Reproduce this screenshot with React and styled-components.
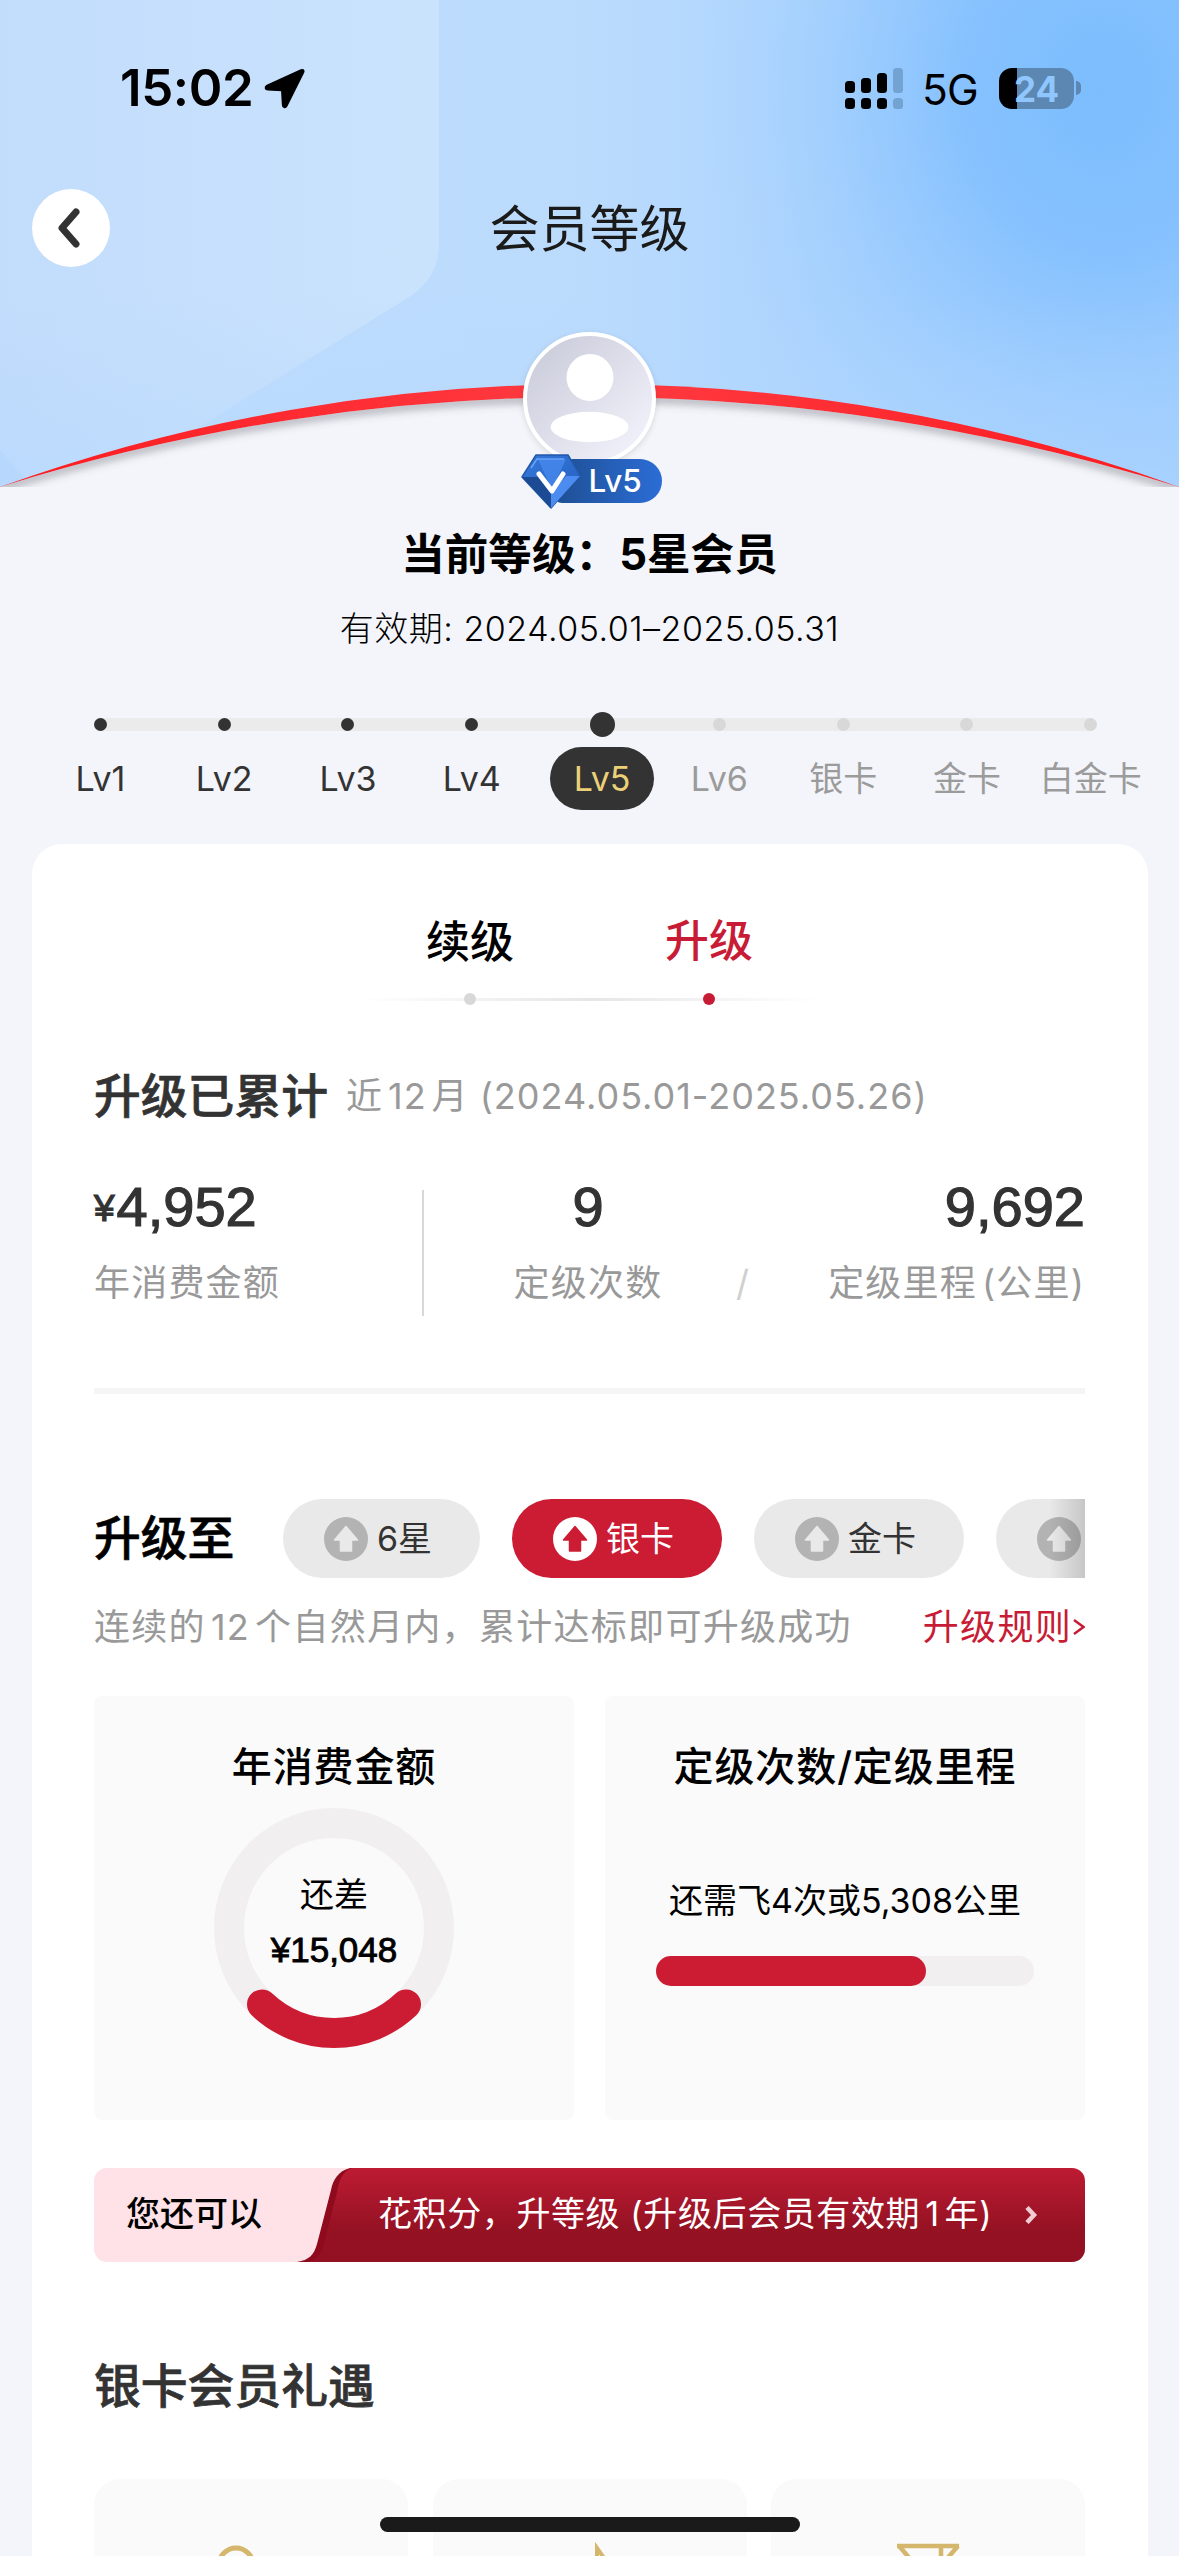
import * as React from "react"
import styled, { createGlobalStyle } from "styled-components"

const GlobalStyle = createGlobalStyle`
  * {
    box-sizing: border-box;
  }

  body {
    margin: 0;
    background-color: #f4f5fa;
    font-family: "Inter", "Noto Sans CJK SC", sans-serif;
    color: #333333;
  }

  h1, h2, h3, p {
    margin: 0;
    font-weight: 400;
  }

  button {
    border: 0;
    padding: 0;
    background: none;
    color: inherit;
    font-family: inherit;
  }
`

const Page = styled.main`
  position: relative;
  width: 1179px;
  height: 2556px;
  overflow: hidden;
  white-space: nowrap;
`

/* Digits and brackets that sit between Chinese characters */
const Inset = styled.span`
  margin: 0 ${(props) => props.$right ?? 5}px 0 5px;
`

/* Header */
const Backdrop = styled.svg`
  position: absolute;
  top: 0;
  left: 0;
  z-index: -1;
`
const StatusBar = styled.div`
  display: flex;
  justify-content: space-between;
  align-items: center;
  height: 176px;
  padding: 0 98px 0 120px;
  color: #000000;
`
const StatusGroup = styled.div`
  display: flex;
  align-items: center;
`
const Clock = styled.span`
  width: 144px;
  font-size: 51px;
  font-weight: 600;
  line-height: 60px;
  letter-spacing: -0.4px;
`
const Network = styled.span`
  margin: 3px 21px 0 19px;
  font-size: 42.5px;
  line-height: 50px;
  letter-spacing: -0.8px;
`
const Battery = styled.div`
  width: 75px;
  height: 41px;
  border-radius: 13px;
  background: linear-gradient(90deg, #000000 18px, #5b87b2 18px);
  color: #8fc6fd;
  font-size: 35px;
  font-weight: 700;
  line-height: 42px;
  text-align: center;
`
const BatteryTip = styled.div`
  width: 5px;
  height: 14px;
  margin-left: 2px;
  border-radius: 0 5px 5px 0;
  background-color: #5b87b2;
`
const NavBar = styled.header`
  display: grid;
  grid-template-columns: 1fr auto 1fr;
  align-items: center;
  height: 103px;
  padding: 0 32px;
`
const BackButton = styled.button`
  display: flex;
  align-items: center;
  justify-content: center;
  width: 78px;
  height: 78px;
  padding-right: 4px;
  border-radius: 50%;
  background-color: #ffffff;
`
const NavTitle = styled.h1`
  padding-top: 2px;
  color: #1a1a1a;
  font-size: 50px;
  line-height: 60px;
`

/* Current level */
const Profile = styled.section`
  display: flex;
  flex-direction: column;
  align-items: center;
  padding-top: 53px;
`
const Avatar = styled.div`
  width: 133px;
  height: 133px;
  border: 4px solid #ffffff;
  border-radius: 50%;
  background: linear-gradient(135deg, #cccddb 10%, #eeeff8 85%);
  box-shadow: 0 2px 6px rgba(0, 0, 0, 0.12);
`
const LevelBadge = styled.div`
  position: relative;
  display: flex;
  align-items: center;
  width: 108px;
  height: 44px;
  margin: -6px 0 0 36px;
  padding-left: 35px;
  border-radius: 8px 22px 22px 8px;
  background: linear-gradient(90deg, #1f4f93, #2b6dd6);
  color: #ffffff;
  font-size: 31.5px;
  font-weight: 500;
  line-height: 46px;
`
const BadgeGem = styled.svg`
  position: absolute;
  left: -36px;
  top: -9px;
`
const LevelTitle = styled.h2`
  margin-top: 22px;
  color: #000000;
  font-size: 43.6px;
  font-weight: 700;
  line-height: 60px;
`
const Validity = styled.p`
  margin-top: 19px;
  color: #000000;
  font-size: 34px;
  font-weight: 300;
  line-height: 50px;
  letter-spacing: 0.5px;
`

/* Level steps */
const Steps = styled.ol`
  display: grid;
  grid-template-columns: repeat(9, 123.8px);
  height: 98px;
  margin: 58px 0 0 38.5px;
  padding: 0;
  list-style: none;
  background: linear-gradient(#ebebec, #ebebec) 62px 6px / 991px 13px no-repeat;
`
const Step = styled.li`
  display: flex;
  flex-direction: column;
  align-items: center;
  padding-left: ${(props) => (props.$current ? "13px" : "0")};
`
const StepDot = styled.span`
  width: ${(props) => (props.$current ? "25px" : "13px")};
  height: ${(props) => (props.$current ? "25px" : "13px")};
  margin: ${(props) => (props.$current ? "0 0 10px" : "6px 0 16px")};
  border-radius: 50%;
  background-color: ${(props) => (props.$locked ? "#d8d8d8" : "#333333")};
`
const StepLabel = styled.span`
  padding: ${(props) => (props.$current ? "0 24px" : "0")};
  border-radius: 32px;
  background-color: ${(props) => (props.$current ? "#333333" : "transparent")};
  color: ${(props) => (props.$current ? "#ecd078" : props.$locked ? "#9b9b9b" : "#333333")};
  font-size: 34px;
  line-height: 63px;
`

/* White card */
const Card = styled.section`
  width: 1116px;
  height: 1740px;
  margin: 34px 0 0 32px;
  padding: 0 63px 0 62px;
  border-radius: 30px;
  background-color: #ffffff;
`
const Tabs = styled.div`
  display: flex;
  justify-content: center;
  gap: 151px;
  height: 162px;
  padding-top: 67px;
  background: linear-gradient(90deg, transparent, #e6e6e6, transparent) center 154px / 460px 3px no-repeat;
`
const Tab = styled.button`
  display: flex;
  flex-direction: column;
  align-items: center;
  color: ${(props) => (props.$active ? "#c81c36" : "#000000")};
  font-size: 44px;
  font-weight: 500;
  line-height: ${(props) => (props.$active ? "60px" : "63px")};

  &::after {
    content: "";
    width: 12px;
    height: 12px;
    margin-top: ${(props) => (props.$active ? "22px" : "19px")};
    border-radius: 50%;
    background-color: ${(props) => (props.$active ? "#c81c36" : "#d8d8d8")};
  }
`
const Heading = styled.h2`
  color: ${(props) => props.$color || "#333333"};
  font-size: 46.8px;
  font-weight: 500;
  line-height: 60px;
  -webkit-text-stroke: 0.7px ${(props) => props.$color || "#333333"};
`
const HeadingRow = styled.div`
  display: flex;
  align-items: center;
  height: 60px;
  margin-top: 60px;
`
const HeadingNote = styled.span`
  margin-left: 18px;
  padding-bottom: 1px;
  color: #999999;
  font-size: 36px;
  line-height: 50px;
  letter-spacing: 1px;
`
const Stats = styled.div`
  display: grid;
  grid-template-columns: 328px 2px 328px 1fr;
  margin-top: 64px;
`
const Stat = styled.div`
  text-align: ${(props) => props.$align || "left"};
`
const StatValue = styled.p`
  height: 64px;
  margin-top: -15px;
  font-family: "Liberation Sans", sans-serif;
  font-size: 56px;
  line-height: 64px;
  -webkit-text-stroke: 1.2px #333333;

  small {
    margin-right: 2px;
    font-size: 37px;
    line-height: 1;
    vertical-align: 5px;
  }
`
const StatLabel = styled.p`
  margin-top: 19px;
  color: #999999;
  font-size: 36px;
  line-height: 50px;
  letter-spacing: 1.2px;
`
const StatDivider = styled.div`
  height: 126px;
  background-color: #d8d8d8;
`
const Slash = styled.span`
  float: left;
  margin-left: -16px;
  color: #d0d0d0;
`
const Rule = styled.hr`
  height: 6px;
  margin: 72px 0 0;
  border: 0;
  background-color: #f5f5f5;
`

/* Upgrade targets */
const TargetRow = styled.div`
  display: flex;
  align-items: center;
  height: 79px;
  margin-top: 105px;

  ${Heading} {
    padding-bottom: 2px;
  }
`
const TargetList = styled.div`
  position: relative;
  display: flex;
  gap: 32px;
  width: 802px;
  margin-left: auto;
  overflow: hidden;

  &::after {
    content: "";
    position: absolute;
    right: 0;
    width: 36px;
    height: 79px;
    background: linear-gradient(90deg, transparent, rgba(0, 0, 0, 0.15));
  }
`
const Target = styled.button`
  display: flex;
  flex: none;
  align-items: center;
  gap: 9px;
  width: ${(props) => props.$width || "210px"};
  height: 79px;
  padding-left: 41px;
  border-radius: 40px;
  background-color: ${(props) => (props.$active ? "#cb1c34" : "#e9e9e9")};
  color: ${(props) => (props.$active ? "#ffffff" : "#333333")};
  font-size: 34px;
  line-height: 77px;
`
const RuleRow = styled.div`
  display: flex;
  justify-content: space-between;
  margin-top: 24px;
  color: #999999;
  font-size: 36px;
  line-height: 50px;
  letter-spacing: 1.3px;
`
const RuleLink = styled.a`
  display: flex;
  align-items: center;
  gap: 1px;
  color: #c81c36;
`
const Panels = styled.div`
  display: grid;
  grid-template-columns: 1fr 1fr;
  gap: 31px;
  margin-top: 44px;
`
const Panel = styled.div`
  display: flex;
  flex-direction: column;
  align-items: center;
  height: 424px;
  padding-top: 46px;
  border-radius: 8px;
  background-color: #fafafa;
  color: #000000;
`
const PanelTitle = styled.h3`
  font-size: 40px;
  font-weight: 500;
  line-height: 50px;
  letter-spacing: 0.9px;
`
const Donut = styled.div`
  display: grid;
  place-items: center;
  margin-top: 16px;

  > * {
    grid-area: 1 / 1;
  }
`
const DonutText = styled.div`
  text-align: center;
  font-size: 34px;
  line-height: 50px;
  margin-top: -12px;
`
const DonutAmount = styled.p`
  margin-top: 5px;
  font-family: "Liberation Sans", sans-serif;
  font-size: 35px;
  -webkit-text-stroke: 0.9px #000000;
`
const MileageText = styled.p`
  margin-top: 84px;
  font-size: 34px;
  line-height: 50px;
`
const Progress = styled.div`
  width: 378px;
  height: 30px;
  margin-top: 30px;
  border-radius: 15px;
  background-color: #f1eff0;
`
const ProgressFill = styled.div`
  height: 100%;
  border-radius: 15px;
  background-color: #cb1c34;
`

/* Points banner */
const Banner = styled.div`
  position: relative;
  z-index: 0;
  display: flex;
  align-items: center;
  height: 94px;
  margin-top: 48px;
  padding: 0 46px 0 32px;
  border-radius: 13px;
  overflow: hidden;
  color: #ffffff;
  font-size: 34px;
  line-height: 50px;
`
const BannerShape = styled.svg`
  position: absolute;
  top: 0;
  left: 0;
  z-index: -1;
`
const BannerLead = styled.strong`
  width: 252px;
  padding-bottom: 2px;
  color: #000000;
  font-weight: 500;
`
const BannerText = styled.span`
  flex: 1;
  padding-bottom: 2px;
  letter-spacing: 0.6px;
`

/* Benefits */
const BenefitsTitle = styled(Heading)`
  margin-top: 94px;
`
const Benefits = styled.div`
  display: grid;
  grid-template-columns: repeat(3, 314px);
  justify-content: space-between;
  margin-top: 63px;
`
const Benefit = styled.div`
  display: flex;
  justify-content: center;
  height: 300px;
  padding-top: 60px;
  border-radius: 26px;
  background-color: #fafafa;
`
const HomeIndicator = styled.div`
  position: absolute;
  left: 380px;
  bottom: 24px;
  width: 420px;
  height: 15px;
  border-radius: 8px;
  background-color: #1a1a1a;
`

const steps = ["Lv1", "Lv2", "Lv3", "Lv4", "Lv5", "Lv6", "银卡", "金卡", "白金卡"]
const currentStep = 4

const HeaderBackdrop = () => (
  <Backdrop width="1179" height="500" viewBox="0 0 1179 500">
    <defs>
      <linearGradient id="sky" x1="0" x2="1" y1="0" y2="0">
        <stop offset="0" stopColor="#bfdcfd" />
        <stop offset="0.5" stopColor="#bbdbfd" />
        <stop offset="0.75" stopColor="#a8d2fe" />
        <stop offset="1" stopColor="#9dccfe" />
      </linearGradient>
      <radialGradient id="glow" gradientUnits="userSpaceOnUse" cx="0" cy="0" r="1" gradientTransform="translate(1100 90) scale(400 460)">
        <stop offset="0" stopColor="#7cbdfe" />
        <stop offset="0.35" stopColor="#7fbefe" stopOpacity="0.8" />
        <stop offset="0.7" stopColor="#8ec5fe" stopOpacity="0.3" />
        <stop offset="1" stopColor="#9dccfe" stopOpacity="0" />
      </radialGradient>
      <linearGradient id="pane" x1="0" x2="1" y1="0" y2="0">
        <stop offset="0" stopColor="#c2dcfc" />
        <stop offset="1" stopColor="#cae3fd" />
      </linearGradient>
      <linearGradient id="fade" x1="0" x2="0" y1="0" y2="1">
        <stop offset="0.6" stopColor="#b4d8fe" stopOpacity="0" />
        <stop offset="1" stopColor="#b4d8fe" stopOpacity="0.45" />
      </linearGradient>
      <linearGradient id="ribbon" x1="0" x2="1" y1="0" y2="0">
        <stop offset="0" stopColor="#fb1c20" />
        <stop offset="0.5" stopColor="#ff3b42" />
        <stop offset="1" stopColor="#fb1c20" />
      </linearGradient>
      <filter id="soft" x="-5%" y="-20%" width="110%" height="150%">
        <feGaussianBlur stdDeviation="4" />
      </filter>
      <clipPath id="ground">
        <path d="M0 487A1976 1976 0 0 1 1179 487V487H0Z" />
      </clipPath>
    </defs>
    <rect width="1179" height="487" fill="url(#sky)" />
    <rect width="1179" height="487" fill="url(#glow)" />
    <path d="M0 0H439V246Q438 280 406 299L196 429L0 487Z" fill="url(#pane)" />
    <path d="M0 450L32 487H0Z" fill="#b9d8fb" />
    <rect width="1179" height="487" fill="url(#fade)" />
    <path d="M0 487A1738 1738 0 0 1 1179 487Z" fill="url(#ribbon)" />
    <path d="M0 487A1976 1976 0 0 1 1179 487V500H0Z" fill="#f4f5fa" />
    <g clipPath="url(#ground)">
      <path d="M0 488A1976 1976 0 0 1 1179 488" fill="none" stroke="#5a5a66" strokeOpacity="0.5" strokeWidth="7" filter="url(#soft)" />
    </g>
  </Backdrop>
)

const Signal = () => (
  <svg width="58" height="41" viewBox="0 0 58 41">
    <rect x="0" y="13" width="10" height="12" rx="3.5" />
    <rect x="16" y="10" width="10" height="15" rx="3.5" />
    <rect x="32" y="5" width="10" height="20" rx="3.5" />
    <rect x="48" y="0" width="10" height="25" rx="3.5" fill="#73a3d2" />
    <rect x="0" y="30" width="10" height="11" rx="3.5" />
    <rect x="16" y="30" width="10" height="11" rx="3.5" />
    <rect x="32" y="30" width="10" height="11" rx="3.5" />
    <rect x="48" y="30" width="10" height="11" rx="3.5" fill="#73a3d2" />
  </svg>
)

const UpArrow = ({ active }) => (
  <svg width="44" height="44" viewBox="0 0 44 44">
    <circle cx="22" cy="22" r="22" fill={active ? "#ffffff" : "#b3b3b3"} />
    <path
      d="M22 9.5L33.5 23H27.5V34H16.5V23H10.5Z"
      fill={active ? "#cb1c34" : "#e9e9e9"}
      stroke={active ? "#cb1c34" : "#e9e9e9"}
      strokeWidth="1.5"
      strokeLinejoin="round"
    />
  </svg>
)

const Gem = () => (
  <BadgeGem width="68" height="62" viewBox="0 0 68 62">
    <defs>
      <linearGradient id="gem" x1="0" x2="1" y1="0" y2="1">
        <stop offset="0" stopColor="#3577dc" />
        <stop offset="1" stopColor="#2360bd" />
      </linearGradient>
    </defs>
    <path d="M18 5H50L62 25L33 58L4 27Z" fill="url(#gem)" stroke="#2159ab" strokeWidth="1.5" strokeLinejoin="round" />
    <path d="M4 27H20L33 44V58Z" fill="#1c4b93" />
    <path d="M62 26H48L33 44V58Z" fill="#4c8cf0" />
    <path d="M20 9H48L34 40Z" fill="#4a8bf1" opacity="0.7" />
    <path d="M13 18L19 9H46" fill="none" stroke="#6aa3f7" strokeWidth="1.5" />
    <path d="M21 24L34 41L45 24" fill="none" stroke="#ffffff" strokeWidth="5" strokeLinecap="round" strokeLinejoin="round" />
  </BadgeGem>
)

const App = () => {
  return (
    <Page>
      <GlobalStyle />
      <HeaderBackdrop />
      <StatusBar>
        <StatusGroup>
          <Clock>15:02</Clock>
          <svg width="42" height="41" viewBox="0 0 42 41" stroke="#000000" strokeWidth="1.5" strokeLinejoin="round">
            <path d="M37 2L3 17.500C0.500 18.700 1 21.800 3.800 21.800L17.800 22.500L18.600 37C18.700 39.800 21.600 40.300 22.800 38L39.500 4.500C40.500 2.300 39.200 1 37 2Z" />
          </svg>
        </StatusGroup>
        <StatusGroup>
          <Signal />
          <Network>5G</Network>
          <Battery>24</Battery>
          <BatteryTip />
        </StatusGroup>
      </StatusBar>
      <NavBar>
        <BackButton aria-label="返回">
          <svg width="24" height="40" viewBox="0 0 24 40" fill="none" stroke="#333333" strokeWidth="7" strokeLinecap="round" strokeLinejoin="round">
            <path d="M19 4L5 20L19 36" />
          </svg>
        </BackButton>
        <NavTitle>会员等级</NavTitle>
      </NavBar>

      <Profile>
        <Avatar>
          <svg width="125" height="125" viewBox="0 0 125 125" fill="#ffffff">
            <circle cx="63" cy="41.500" r="23.500" />
            <ellipse cx="62.500" cy="91" rx="39" ry="15.200" />
          </svg>
        </Avatar>
        <LevelBadge>
          <Gem />
          Lv5
        </LevelBadge>
        <LevelTitle>当前等级：5星会员</LevelTitle>
        <Validity>有效期: 2024.05.01–2025.05.31</Validity>
      </Profile>

      <Steps>
        {steps.map((name, index) => (
          <Step key={name} $current={index === currentStep}>
            <StepDot $current={index === currentStep} $locked={index > currentStep} />
            <StepLabel $current={index === currentStep} $locked={index > currentStep}>{name}</StepLabel>
          </Step>
        ))}
      </Steps>

      <Card>
        <Tabs>
          <Tab>续级</Tab>
          <Tab $active>升级</Tab>
        </Tabs>

        <HeadingRow>
          <Heading>升级已累计</Heading>
          <HeadingNote>近<Inset>12</Inset>月 (2024.05.01-2025.05.26)</HeadingNote>
        </HeadingRow>
        <Stats>
          <Stat>
            <StatValue><small>¥</small>4,952</StatValue>
            <StatLabel>年消费金额</StatLabel>
          </Stat>
          <StatDivider />
          <Stat $align="center">
            <StatValue>9</StatValue>
            <StatLabel>定级次数</StatLabel>
          </Stat>
          <Stat $align="right">
            <StatValue>9,692</StatValue>
            <StatLabel><Slash>/</Slash>定级里程<Inset $right={0}>(公里)</Inset></StatLabel>
          </Stat>
        </Stats>
        <Rule />

        <TargetRow>
          <Heading $color="#000000">升级至</Heading>
          <TargetList>
            <Target $width="197px"><UpArrow />6星</Target>
            <Target $active><UpArrow active />银卡</Target>
            <Target><UpArrow />金卡</Target>
            <Target><UpArrow /></Target>
          </TargetList>
        </TargetRow>
        <RuleRow>
          <p>连续的<Inset>12</Inset>个自然月内，累计达标即可升级成功</p>
          <RuleLink>
            升级规则
            <svg width="12" height="18" viewBox="0 0 12 18" fill="none" stroke="#c81c36" strokeWidth="2.500">
              <path d="M1 2L10.500 9L1 16" />
            </svg>
          </RuleLink>
        </RuleRow>

        <Panels>
          <Panel>
            <PanelTitle>年消费金额</PanelTitle>
            <Donut>
              <svg width="240" height="240" viewBox="0 0 240 240" fill="none" strokeWidth="30">
                <circle cx="120" cy="120" r="105" stroke="#f1eff0" />
                <path d="M48 196.400A105 105 0 0 0 192 196.400" stroke="#cb1c34" strokeLinecap="round" />
              </svg>
              <DonutText>
                <p>还差</p>
                <DonutAmount>¥15,048</DonutAmount>
              </DonutText>
            </Donut>
          </Panel>
          <Panel>
            <PanelTitle>定级次数/定级里程</PanelTitle>
            <MileageText>还需飞4次或5,308公里</MileageText>
            <Progress>
              <ProgressFill style={{ width: `${(270 / 378) * 100}%` }} />
            </Progress>
          </Panel>
        </Panels>

        <Banner>
          <BannerShape width="991" height="94" viewBox="0 0 991 94">
            <defs>
              <linearGradient id="banner" x1="0" x2="0" y1="0" y2="1">
                <stop offset="0" stopColor="#bd1b33" />
                <stop offset="0.65" stopColor="#951223" />
                <stop offset="1" stopColor="#921021" />
              </linearGradient>
            </defs>
            <rect width="991" height="94" fill="#fee2e7" />
            <path d="M256 0C244 3 239 12 237 22L223 76C220 87 215 92 203 94H300V0Z" fill="#8f0a1d" />
            <path d="M258 0C247 4 245 14 243 24L230 76C227 88 222 92 212 94H991V0Z" fill="url(#banner)" />
          </BannerShape>
          <BannerLead>您还可以</BannerLead>
          <BannerText>花积分，升等级 (升级后会员有效期<Inset>1</Inset>年)</BannerText>
          <svg width="15" height="18" viewBox="0 0 15 18" fill="none" stroke="#f0cdd2" strokeWidth="4.500">
            <path d="M3 1.500L10 9L3 16.500" />
          </svg>
        </Banner>

        <BenefitsTitle>银卡会员礼遇</BenefitsTitle>
        <Benefits>
          <Benefit>
            <svg width="80" height="80" viewBox="0 0 80 80" fill="none" stroke="#d4b76c" strokeWidth="5">
              <circle cx="25" cy="26" r="17" />
            </svg>
          </Benefit>
          <Benefit>
            <svg width="80" height="80" viewBox="0 0 80 80" fill="none" stroke="#d4b76c" strokeWidth="4">
              <path d="M47 50V9L66 36" />
            </svg>
          </Benefit>
          <Benefit>
            <svg width="80" height="80" viewBox="0 0 80 80" fill="none" stroke="#d4b76c" strokeWidth="4.500">
              <path d="M9 7H71M53 7V40M11 7L24 22M70 7L57 22" />
            </svg>
          </Benefit>
        </Benefits>
      </Card>
      <HomeIndicator />
    </Page>
  )
}

export default App
